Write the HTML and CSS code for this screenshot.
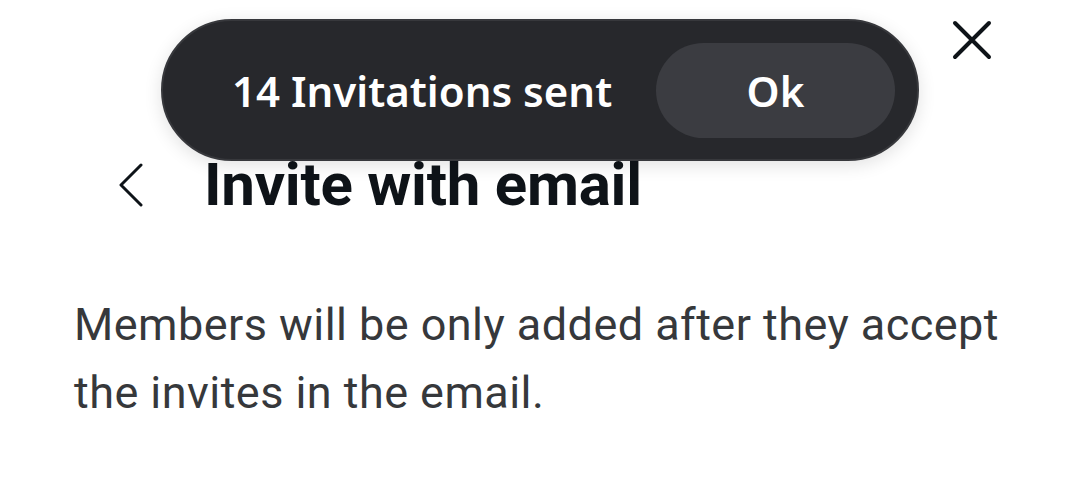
FILE: index.html
```html
<!DOCTYPE html>
<html lang="en">
<head>
<meta charset="utf-8">
<link rel="stylesheet" href="styles.css">
</head>
<body>
<div class="dialog">
  <div class="topbar">
    <button class="close" aria-label="Close">
      <svg width="40" height="40" viewBox="0 0 40 40"><path d="M3 3 L37 37 M37 3 L3 37" stroke="#0e1318" stroke-width="4" stroke-linecap="round" fill="none"/></svg>
    </button>
  </div>
  <div class="header">
    <button class="back" aria-label="Back">
      <svg width="26" height="44" viewBox="0 0 26 44"><path d="M23 2 L3 22 L23 42" stroke="#0e1318" stroke-width="3" stroke-linecap="round" stroke-linejoin="round" fill="none"/></svg>
    </button>
    <h1 class="title">Invite with email</h1>
  </div>
  <p class="desc">Members will be only added after they accept the invites in the email.</p>
</div>
<div class="toast">
  <span class="toast-text">14 Invitations sent</span>
  <button class="toast-btn">Ok</button>
</div>
</body>
</html>
```
FILE: styles.css
```css
html, body {
  margin: 0;
  padding: 0;
  background: #ffffff;
  font-family: "Noto Sans", "Open Sans", sans-serif;
}
.dialog {
  padding: 20px 80px 0 74px;
  position: relative;
}
.topbar {
  display: flex;
  justify-content: flex-end;
  padding-right: 8px;
}
.close {
  background: none;
  border: 0;
  padding: 0;
  width: 40px;
  height: 40px;
  display: flex;
}
.header {
  display: flex;
  align-items: center;
  gap: 60px;
  margin-top: 89px;
  padding-left: 44px;
}
.back {
  background: none;
  border: 0;
  padding: 0;
  display: flex;
}
.title {
  margin: 0;
  font-family: Roboto, "Noto Sans", sans-serif;
  font-size: 60px;
  font-weight: 700;
  color: #0e1318;
  line-height: 72px;
  letter-spacing: -0.25px;
}
.desc {
  margin: 70px 0 0 0;
  font-family: Roboto, "Noto Sans", sans-serif;
  font-size: 45px;
  line-height: 68px;
  letter-spacing: 0.45px;
  color: #36383b;
  font-weight: 400;
}
.toast {
  position: absolute;
  left: 161px;
  top: 19px;
  width: 758px;
  height: 142px;
  box-sizing: border-box;
  border-radius: 71px;
  background: #27282c;
  border: 2px solid #37383c;
  box-shadow: 0 4px 18px rgba(0,0,0,0.12);
  display: flex;
  align-items: center;
  justify-content: space-between;
  padding: 0 22px 0 69px;
}
.toast-text {
  color: #ffffff;
  font-size: 42px;
  font-weight: 600;
}
.toast-btn {
  width: 239px;
  height: 95px;
  border-radius: 48px;
  border: 0;
  background: #3b3c41;
  color: #ffffff;
  font-family: inherit;
  font-size: 42px;
  font-weight: 600;
}
```
